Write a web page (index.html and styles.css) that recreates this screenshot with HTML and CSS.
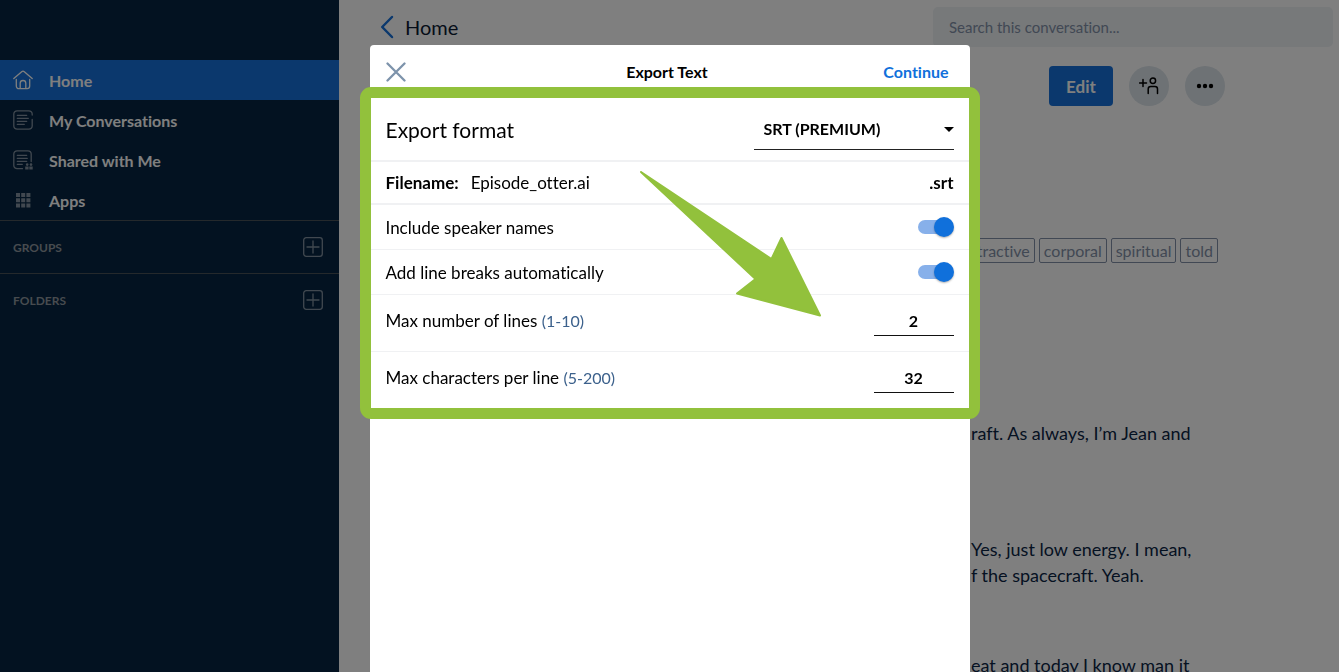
FILE: index.html
```html
<!DOCTYPE html>
<html lang="en">
<head>
    <meta charset="UTF-8">
    <meta name="viewport" content="width=device-width, initial-scale=1.0">
    <title>Export Text</title>
    <link rel="stylesheet" href="styles.css">
</head>
<body>
<div class="app">
    <aside class="sidebar">
        <nav class="nav">
            <a href="#" class="nav-item active">
                <svg class="nav-icon" viewBox="0 0 20 20"><path d="M.8 8.600 8.700 1.700a2 2 0 0 1 2.600 0l7.900 6.900M3.300 9.500v6.600a2.600 2.600 0 0 0 2.600 2.600h8.200a2.600 2.600 0 0 0 2.600-2.600V9.500M7.200 18.500v-5.200a2.800 2.800 0 0 1 5.600 0v5.200"/></svg>
                Home
            </a>
            <a href="#" class="nav-item">
                <svg class="nav-icon muted" viewBox="0 0 20 20"><path d="M19.200 9.500v6.400a3.300 3.300 0 0 1-3.300 3.300H4.100a3.300 3.300 0 0 1-3.300-3.300V4.100A3.300 3.300 0 0 1 4.100.8h11.800a3.300 3.300 0 0 1 3.300 3.300v1M4.300 5.300h9.400M4.300 8.300h11M4.300 11.300h9.400M4.300 14.300h7"/></svg>
                My Conversations
            </a>
            <a href="#" class="nav-item">
                <svg class="nav-icon muted" viewBox="0 0 20 20"><path d="M9.500 18.700H4.100a3.300 3.300 0 0 1-3.300-3.300V4.100A3.300 3.300 0 0 1 4.100.8h10.800a3.300 3.300 0 0 1 3.300 3.300v7.400M4.300 5.300h9.400M4.300 8.300h10M4.300 11.300h9.400M4.300 14.300h5"/><g class="solid"><circle cx="14.200" cy="14.600" r="1.300"/><circle cx="18" cy="14.600" r="1.300"/><path d="M12.200 16.600h3.400v3h-3.400zM16.300 16.600h3.400v3h-3.400z"/></g></svg>
                Shared with Me
            </a>
            <a href="#" class="nav-item">
                <svg class="nav-icon muted" viewBox="0 0 20 20"><path class="solid" d="M3 3h4v4H3zM8.200 3h4v4h-4zM13.400 3h4v4h-4zM3 8.200h4v4H3zM8.200 8.200h4v4h-4zM13.400 8.200h4v4h-4zM3 13.400h4v4H3zM8.200 13.400h4v4h-4zM13.400 13.400h4v4h-4z"/></svg>
                Apps
            </a>
        </nav>
        <div class="side-section">
            <h2>GROUPS</h2>
            <button type="button" class="add-btn" aria-label="Add group">
                <svg class="nav-icon muted" viewBox="0 0 20 20"><rect x=".7" y=".7" width="18.600" height="18.600" rx="2.500"/><path d="M10 4v12M4 10h12"/></svg>
            </button>
        </div>
        <div class="side-section">
            <h2>FOLDERS</h2>
            <button type="button" class="add-btn" aria-label="Add folder">
                <svg class="nav-icon muted" viewBox="0 0 20 20"><rect x=".7" y=".7" width="18.600" height="18.600" rx="2.500"/><path d="M10 4v12M4 10h12"/></svg>
            </button>
        </div>
    </aside>

    <main class="main">
        <header class="topbar">
            <a href="#" class="back">
                <svg width="14" height="24" viewBox="0 0 14 24"><path d="M12 2 2.200 12 12 22"/></svg>
                Home
            </a>
            <input type="search" class="search" placeholder="Search this conversation..." aria-label="Search this conversation">
        </header>

        <div class="actions">
            <button type="button" class="edit-btn">Edit</button>
            <button type="button" class="round-btn" aria-label="Add people">
                <svg width="20" height="20" viewBox="0 0 20 20"><path d="M.5 7h7M4 3.500v7M9.200 17.500v-4.500a2.500 2.500 0 0 1 2.500-2.500h4.300a2.500 2.500 0 0 1 2.500 2.500v4.500"/><circle cx="13.900" cy="4.800" r="2.700"/></svg>
            </button>
            <button type="button" class="round-btn" aria-label="More">
                <svg width="20" height="20" viewBox="0 0 20 20"><g class="solid"><circle cx="4" cy="10" r="2.200"/><circle cx="10" cy="10" r="2.200"/><circle cx="16" cy="10" r="2.200"/></g></svg>
            </button>
        </div>

        <div class="tags">
            <span class="tag">attractive</span>
            <span class="tag">corporal</span>
            <span class="tag">spiritual</span>
            <span class="tag">told</span>
        </div>

        <div class="transcript">
            <p>raft. As always, I’m Jean and</p>
            <p>Yes, just low energy. I mean,<br>f the spacecraft. Yeah.</p>
            <p>eat and today I know man it</p>
        </div>
    </main>
</div>

<div class="overlay">
    <form class="dialog" role="dialog" aria-labelledby="dialogTitle">
        <header class="dialog-header">
            <button type="button" class="close-btn" aria-label="Close">
                <svg width="20" height="20" viewBox="0 0 20 20"><path d="M1.500 1.500l17 17M18.500 1.500l-17 17"/></svg>
            </button>
            <h1 id="dialogTitle">Export Text</h1>
            <button type="submit" class="continue-btn">Continue</button>
        </header>

        <div class="options">
            <div class="row row-format">
                <label for="format">Export format</label>
                <div class="select-wrap">
                    <select id="format">
                        <option>SRT (PREMIUM)</option>
                    </select>
                    <svg class="caret" width="10" height="5" viewBox="0 0 10 5"><path d="M0 0h10L5 5z"/></svg>
                </div>
            </div>
            <div class="row row-filename">
                <label for="filename">Filename:</label>
                <input type="text" id="filename" value="Episode_otter.ai">
                <span class="ext">.srt</span>
            </div>
            <div class="row">
                <label for="speakers">Include speaker names</label>
                <input type="checkbox" class="toggle" id="speakers" checked>
            </div>
            <div class="row">
                <label for="breaks">Add line breaks automatically</label>
                <input type="checkbox" class="toggle" id="breaks" checked>
            </div>
            <div class="row row-number">
                <label for="maxLines">Max number of lines <span class="hint">(1-10)</span></label>
                <input type="number" id="maxLines" min="1" max="10" value="2">
            </div>
            <div class="row row-number">
                <label for="maxChars">Max characters per line <span class="hint">(5-200)</span></label>
                <input type="number" id="maxChars" min="5" max="200" value="32">
            </div>
            <svg class="arrow" width="184" height="148" viewBox="0 0 184 148"><path d="M2 2 132.500 89 142.500 68 181 145.500 98 123.500 116.500 109z"/></svg>
        </div>
    </form>
</div>
</body>
</html>
```

FILE: styles.css
```css
* {
    box-sizing: border-box;
}
body {
    margin: 0;
    height: 100vh;
    overflow: hidden;
    font-family: Lato, "Liberation Sans", sans-serif;
    font-size: 17px;
    font-variant-ligatures: none;
    color: #000;
}
h1, h2, p {
    margin: 0;
}
a {
    color: inherit;
    text-decoration: none;
}
button, input, select {
    font: inherit;
    color: inherit;
    margin: 0;
    padding: 0;
    border: none;
    background: none;
    outline: none;
}
button {
    cursor: pointer;
}
svg {
    display: block;
    flex: none;
    fill: none;
    stroke: currentColor;
    stroke-linecap: round;
    stroke-linejoin: round;
}
.solid {
    fill: currentColor;
    stroke: none;
}
.app {
    display: flex;
    height: 100%;
    background: #fff;
}

/* Sidebar */
.sidebar {
    width: 339px;
    flex: none;
    padding-top: 60px;
    background: #062542;
    color: #fff;
}
.nav-item {
    display: flex;
    align-items: center;
    gap: 16px;
    height: 40px;
    padding: 0 13px;
    font-size: 16px;
    font-weight: bold;
}
.nav-item.active {
    background: #1671da;
}
.nav-icon {
    width: 20px;
    height: 20px;
    stroke-width: 1.3;
}
.muted {
    color: #8391a0;
}
.side-section {
    display: flex;
    align-items: center;
    justify-content: space-between;
    height: 53px;
    padding: 0 16px 0 13px;
    border-top: 1px solid #4b5259;
}
.side-section h2 {
    font-size: 12px;
    color: #8f979f;
}

/* Conversation page */
.main {
    flex: 1;
    min-width: 0;
}
.topbar {
    display: flex;
    align-items: center;
    justify-content: space-between;
    height: 54px;
    padding: 0 6px 0 41px;
}
.back {
    display: flex;
    align-items: center;
    gap: 11px;
    font-size: 20px;
    color: #0b1a33;
}
.back svg {
    color: #1671da;
    stroke-width: 2.5;
}
.search {
    width: 400px;
    height: 40px;
    padding: 0 16px;
    border-radius: 5px;
    font-size: 15px;
    background: #eef2f5;
}
.search::placeholder {
    color: #8391a8;
}
.actions {
    display: flex;
    justify-content: flex-end;
    gap: 16px;
    padding: 12px 114px 0 0;
}
.edit-btn {
    width: 64px;
    height: 40px;
    border-radius: 4px;
    font-weight: bold;
    color: #fff;
    background: #1671da;
}
.round-btn {
    display: grid;
    place-items: center;
    width: 40px;
    height: 40px;
    border-radius: 50%;
    stroke-width: 1.5;
    background: #dce4ea;
}
.tags {
    display: flex;
    justify-content: flex-end;
    gap: 4px;
    padding: 132px 121px 0 0;
}
.tag {
    height: 25px;
    padding: 0 4px;
    border: 1px solid #8391a8;
    border-radius: 2px;
    font-size: 16px;
    line-height: 24px;
    color: #8391a8;
}
.transcript {
    display: grid;
    gap: 64px;
    padding: 157px 0 0 632px;
    font-size: 18px;
    line-height: 26px;
    color: #0b2545;
}
.transcript p {
    min-height: 52px;
}

/* Export dialog */
.overlay {
    position: fixed;
    inset: 0;
    padding-top: 45px;
    background: rgba(0, 0, 0, 0.5);
}
.dialog {
    width: 600px;
    height: 100%;
    margin: 0 auto;
    border-radius: 4px 4px 0 0;
    background: #fff;
}
.dialog-header {
    display: grid;
    grid-template-columns: 1fr auto 1fr;
    align-items: center;
    height: 53px;
    padding: 0 21px 0 16px;
}
.dialog-header h1 {
    font-size: 16px;
}
.close-btn {
    justify-self: start;
    color: #7d93ab;
    stroke-width: 2.3;
}
.continue-btn {
    justify-self: end;
    font-size: 16px;
    font-weight: bold;
    color: #1070db;
}
.options {
    position: relative;
}
/* Green frame around the options */
.options::after {
    content: "";
    position: absolute;
    inset: -11px -10px;
    border: 11px solid #92c13c;
    border-radius: 11px;
    pointer-events: none;
}
.row {
    display: flex;
    align-items: center;
    justify-content: space-between;
    height: 45px;
    padding: 0 16px;
    border-bottom: 1px solid #f0f1f3;
}
.row-format {
    height: 64px;
    border-bottom-width: 2px;
}
.row-format label {
    font-size: 21px;
}
.select-wrap {
    position: relative;
    width: 200px;
}
.select-wrap select {
    width: 100%;
    height: 41px;
    padding-left: 10px;
    border-bottom: 1px solid #222;
    appearance: none;
    font-size: 16px;
    font-weight: bold;
}
.caret {
    position: absolute;
    top: 18px;
    right: 0;
    fill: #000;
    stroke: none;
    pointer-events: none;
}
.row-filename {
    height: 43px;
    gap: 12px;
    border-bottom-width: 2px;
}
.row-filename label, .ext {
    font-weight: bold;
}
.row-filename input {
    flex: 1;
}
.toggle {
    appearance: none;
    position: relative;
    width: 36px;
    height: 20px;
    cursor: pointer;
}
.toggle::before {
    content: "";
    position: absolute;
    inset: 3px 2px 3px 0;
    border-radius: 7px;
    background: #87b0ea;
}
.toggle::after {
    content: "";
    position: absolute;
    top: 0;
    right: 0;
    width: 20px;
    height: 20px;
    border-radius: 50%;
    background: #1070db;
    box-shadow: 0 1px 2px rgba(0, 0, 0, 0.3);
}
.row-number {
    height: 57px;
    padding: 10px 16px 15px;
}
.row-number:nth-last-child(2) {
    height: 56px;
    border-bottom: none;
}
.row-number input {
    width: 80px;
    height: 31px;
    border-bottom: 1px solid #111;
    appearance: textfield;
    font-size: 16px;
    font-weight: bold;
    text-align: center;
}
.row-number input::-webkit-inner-spin-button {
    display: none;
}
.hint {
    font-size: 16px;
    color: #3c618c;
}
.arrow {
    position: absolute;
    top: 72px;
    left: 269px;
    fill: #92c13c;
    stroke: #92c13c;
    stroke-width: 2;
    pointer-events: none;
}
```
